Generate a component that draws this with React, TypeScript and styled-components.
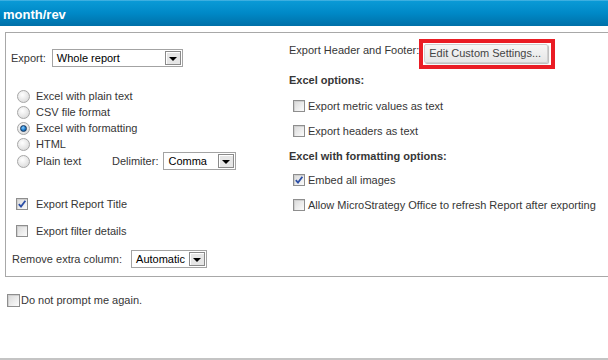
import React from "react";
import styled, { createGlobalStyle } from "styled-components";

const GlobalStyle = createGlobalStyle`
  html, body {
    margin: 0;
    padding: 0;
    background: #fff;
  }
  body {
    font-family: "Liberation Sans", Arial, sans-serif;
    font-size: 11px;
    color: #363636;
  }
`;

const Page = styled.div`
    width: 608px;
    height: 360px;
    box-sizing: border-box;
    border-bottom: 2px solid #c4c4c4;
    overflow: hidden;
    display: flex;
    flex-direction: column;
`;

const TitleBar = styled.div`
    height: 26px;
    box-sizing: border-box;
    padding: 2px 0 0 3px;
    display: flex;
    align-items: center;
    background: linear-gradient(#6fc3ea 0, #0a9ad6 1px, #0089c7 50%, #0070a8 100%);
    color: #fff;
    font-weight: bold;
    font-size: 13px;
`;

const Panel = styled.div`
    margin: 6px -20px 0 5px;
    height: 243px;
    border: 1px solid #a8a8a8;
    display: flex;
`;

const LeftCol = styled.div`
    width: 273px;
    padding: 16px 0 0 5px;
    display: flex;
    flex-direction: column;
`;

const RightCol = styled.div`
    flex: 1;
    padding: 6px 0 0 5px;
    display: flex;
    flex-direction: column;
`;

const Row = styled.div<{ $top?: number; $height?: number; $indent?: number }>`
    display: flex;
    align-items: center;
    height: ${(p) => p.$height ?? 16}px;
    margin-top: ${(p) => p.$top ?? 0}px;
    padding-left: ${(p) => p.$indent ?? 0}px;
    white-space: nowrap;
`;

const Label = styled.span<{ $gap?: number; $after?: number }>`
    display: inline-block;
    margin-left: ${(p) => p.$gap ?? 0}px;
    margin-right: ${(p) => p.$after ?? 6}px;
    line-height: 13px;
`;

const HeaderLabel = styled(Label)`
    align-self: flex-start;
    margin-top: 5px;
`;

const OptionText = styled.span<{ $gap?: number; $width?: number }>`
    margin-left: ${(p) => p.$gap ?? 8}px;
    width: ${(p) => (p.$width ? `${p.$width}px` : "auto")};
    line-height: 13px;
`;

const Heading = styled.div<{ $top: number }>`
    margin-top: ${(p) => p.$top}px;
    height: 14px;
    line-height: 14px;
    font-weight: bold;
    color: #363636;
`;

const SelectBox = styled.div<{ $width: number }>`
    width: ${(p) => p.$width}px;
    height: 18px;
    box-sizing: border-box;
    border: 1px solid #a3a3a3;
    background: #fff;
    display: flex;
    align-items: center;
    justify-content: space-between;
    padding: 0 1px 0 4px;
    color: #000;
`;

const ArrowButton = styled.span`
    width: 16px;
    height: 14px;
    box-sizing: border-box;
    border: 1px solid #8a8a8a;
    box-shadow: inset 1px 1px 0 #fff;
    background: #e6e6e6;
    display: flex;
    align-items: center;
    justify-content: center;
    padding-top: 1px;
`;

const Triangle = styled.span`
    width: 0;
    height: 0;
    border-left: 4px solid transparent;
    border-right: 4px solid transparent;
    border-top: 4px solid #000;
`;

const RadioDot = styled.span<{ $on?: boolean }>`
    width: 13px;
    height: 13px;
    box-sizing: border-box;
    border-radius: 50%;
    border: 1px solid #a6a6a6;
    background: radial-gradient(circle at 40% 35%, #ffffff 0, #f0f0f0 35%, #d2d2d2 100%);
    display: flex;
    align-items: center;
    justify-content: center;
    flex-shrink: 0;

    &::after {
        content: "";
        display: ${(p) => (p.$on ? "block" : "none")};
        width: 5px;
        height: 5px;
        border-radius: 50%;
        border: 1px solid #17365c;
        background: radial-gradient(circle at 40% 35%, #8fd0ff 0, #1f7fd0 50%, #0b4a86 100%);
    }
`;

const CheckBox = styled.span<{ $size?: number }>`
    width: ${(p) => p.$size ?? 12}px;
    height: ${(p) => p.$size ?? 12}px;
    box-sizing: border-box;
    border: 1px solid #8e8e8e;
    background: linear-gradient(135deg, #d8d8d8 0, #ececec 55%, #fbfbfb 100%);
    box-shadow: inset 1px 1px 0 #cfcfcf;
    display: flex;
    align-items: center;
    justify-content: center;
    flex-shrink: 0;
`;

const Button = styled.button`
    height: 19px;
    box-sizing: border-box;
    padding: 0 6px 0 4px;
    border: 1px solid #cfcfcf;
    border-radius: 2px;
    background: linear-gradient(#f6f6f6, #e6e6e6);
    box-shadow: 1px 1px 1px #b8b8b8;
    font-family: "Liberation Sans", Arial, sans-serif;
    font-size: 11px;
    color: #444;
    line-height: 13px;
`;

const Highlight = styled.span`
    display: inline-flex;
    border: 4px solid #ea1c24;
    padding: 1px 3px 2px 1px;
`;

const Footer = styled.div`
    margin-top: 15px;
    padding-left: 7px;
`;

const Select = ({ value, width }: { value: string; width: number }) => (
    <SelectBox $width={width}>
      <span>{value}</span>
      <ArrowButton><Triangle /></ArrowButton>
    </SelectBox>
);

const Check = ({ checked, size }: { checked?: boolean; size?: number }) => (
    <CheckBox $size={size}>
      {checked && (
          <svg width="10" height="10" viewBox="0 0 10 10">
            <path d="M1.8 5.2 L4 7.6 L8.4 1.8" fill="none" stroke="#2b4ea6" strokeWidth="1.8" />
          </svg>
      )}
    </CheckBox>
);

const radios = [
  { label: "Excel with plain text" },
  { label: "CSV file format" },
  { label: "Excel with formatting", on: true },
  { label: "HTML" },
];

const App: React.FC = () => {
  return (
      <Page>
        <GlobalStyle />
        <TitleBar>month/rev</TitleBar>
        <Panel>
          <LeftCol>
            <Row $height={18}>
              <Label>Export:</Label>
              <Select value="Whole report" width={131} />
            </Row>
            {radios.map((r, i) => (
                <Row key={r.label} $top={i === 0 ? 21 : 0} $indent={6}>
                  <RadioDot $on={r.on} />
                  <OptionText $gap={6}>{r.label}</OptionText>
                </Row>
            ))}
            <Row $height={18} $indent={6}>
              <RadioDot />
              <OptionText $gap={6} $width={72}>Plain text</OptionText>
              <Label $gap={4} $after={5}>Delimiter:</Label>
              <Select value="Comma" width={73} />
            </Row>
            <Row $top={26} $indent={5}>
              <Check checked />
              <OptionText>Export Report Title</OptionText>
            </Row>
            <Row $top={11} $indent={5}>
              <Check />
              <OptionText>Export filter details</OptionText>
            </Row>
            <Row $top={11} $height={18}>
              <Label $gap={1} $after={9}>Remove extra column:</Label>
              <Select value="Automatic" width={76} />
            </Row>
          </LeftCol>
          <RightCol>
            <Row $height={30}>
              <HeaderLabel $after={0}>Export Header and Footer:</HeaderLabel>
              <Highlight>
                <Button>Edit Custom Settings...</Button>
              </Highlight>
            </Row>
            <Heading $top={4}>Excel options:</Heading>
            <Row $top={11} $indent={4}>
              <Check />
              <OptionText $gap={3}>Export metric values as text</OptionText>
            </Row>
            <Row $top={9} $indent={4}>
              <Check />
              <OptionText $gap={3}>Export headers as text</OptionText>
            </Row>
            <Heading $top={10}>Excel with formatting options:</Heading>
            <Row $top={9} $indent={4}>
              <Check checked />
              <OptionText $gap={3}>Embed all images</OptionText>
            </Row>
            <Row $top={9} $indent={4}>
              <Check />
              <OptionText $gap={3}>Allow MicroStrategy Office to refresh Report after exporting</OptionText>
            </Row>
          </RightCol>
        </Panel>
        <Footer>
          <Row>
            <Check size={13} />
            <OptionText $gap={1}>Do not prompt me again.</OptionText>
          </Row>
        </Footer>
      </Page>
  );
};

export default App;
